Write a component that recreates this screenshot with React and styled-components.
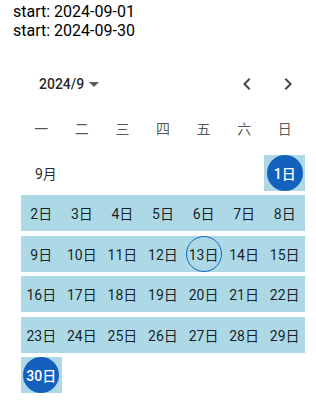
import React from 'react';
import styled, { createGlobalStyle } from 'styled-components';

const GlobalStyle = createGlobalStyle`
  html, body { margin: 0; padding: 0; background: #fff; }
  body { font-family: Roboto, "Noto Sans CJK SC", sans-serif; }
`;

const Page = styled.div`
  width: 316px;
  height: 403px;
  overflow: hidden;
`;

const Info = styled.div`
  padding: 3px 0 0 13px;
  font-size: 16px;
  line-height: 18.5px;
  color: #000;
`;

const Calendar = styled.div`
  margin: 32px 0 0 21px;
  width: 284px;
`;

const Header = styled.div`
  display: flex;
  align-items: center;
  height: 24px;
  padding: 0 5px 0 18px;
`;

const Label = styled.span`
  font-size: 14px;
  font-weight: 500;
  line-height: 24px;
  color: rgba(0, 0, 0, 0.87);
`;

const Caret = styled.svg`
  display: block;
  width: 10px;
  height: 5px;
  margin-left: 5px;
  fill: rgba(0, 0, 0, 0.65);
`;

const Nav = styled.div`
  margin-left: auto;
  display: flex;
  gap: 17px;
`;

const NavIcon = styled.svg`
  display: block;
  width: 24px;
  height: 24px;
  fill: rgba(0, 0, 0, 0.72);
`;

const Weekdays = styled.div`
  display: grid;
  grid-template-columns: repeat(7, 1fr);
  align-items: center;
  height: 40px;
  margin-top: 12px;
`;

const Weekday = styled.span`
  text-align: center;
  font-size: 14px;
  color: rgba(0, 0, 0, 0.68);
`;

const Days = styled.div`
  display: grid;
  grid-template-columns: repeat(7, 1fr);
  grid-auto-rows: 36px;
  row-gap: 4.5px;
  margin-top: 6.5px;
`;

const MonthLabel = styled.div`
  grid-column: span 6;
  display: flex;
  align-items: center;
  padding-left: 14px;
  font-size: 14px;
  color: rgba(0, 0, 0, 0.87);
`;

const Cell = styled.div`
  display: flex;
  align-items: center;
  justify-content: center;
  background: ${(p) => (p.$filled ? '#add8e6' : 'transparent')};
`;

const Day = styled.span`
  box-sizing: border-box;
  width: 36px;
  height: 36px;
  border-radius: 50%;
  display: flex;
  align-items: center;
  justify-content: center;
  font-size: 14px;
  white-space: nowrap;
  color: ${(p) => (p.$variant === 'selected' ? '#fff' : 'rgba(0, 0, 0, 0.87)')};
  background: ${(p) => (p.$variant === 'selected' ? '#1360bd' : 'transparent')};
  border: ${(p) => (p.$variant === 'today' ? '1px solid #1565c0' : 'none')};
  font-weight: ${(p) => (p.$variant === 'selected' ? 500 : 400)};
`;

const weekdays = ['一', '二', '三', '四', '五', '六', '日'];
const middleDays = Array.from({ length: 28 }, (_, i) => i + 2);

export default function App() {
  return (
    <Page>
      <GlobalStyle />
      <Info>
        <div>start: 2024-09-01</div>
        <div>start: 2024-09-30</div>
      </Info>
      <Calendar>
        <Header>
          <Label>2024/9</Label>
          <Caret viewBox="7 10 10 5">
            <path d="M7 10l5 5 5-5z" />
          </Caret>
          <Nav>
            <NavIcon viewBox="0 0 24 24">
              <path d="M15.41 16.59 10.83 12l4.58-4.59L14 6l-6 6 6 6 1.41-1.41z" />
            </NavIcon>
            <NavIcon viewBox="0 0 24 24">
              <path d="M8.59 16.59 13.17 12 8.59 7.41 10 6l6 6-6 6-1.41-1.41z" />
            </NavIcon>
          </Nav>
        </Header>
        <Weekdays>
          {weekdays.map((w) => (
            <Weekday key={w}>{w}</Weekday>
          ))}
        </Weekdays>
        <Days>
          <MonthLabel>9月</MonthLabel>
          <Cell $filled>
            <Day $variant="selected">1日</Day>
          </Cell>
          {middleDays.map((d) => (
            <Cell key={d} $filled>
              <Day $variant={d === 13 ? 'today' : 'plain'}>{d}日</Day>
            </Cell>
          ))}
          <Cell $filled>
            <Day $variant="selected">30日</Day>
          </Cell>
        </Days>
      </Calendar>
    </Page>
  );
}
